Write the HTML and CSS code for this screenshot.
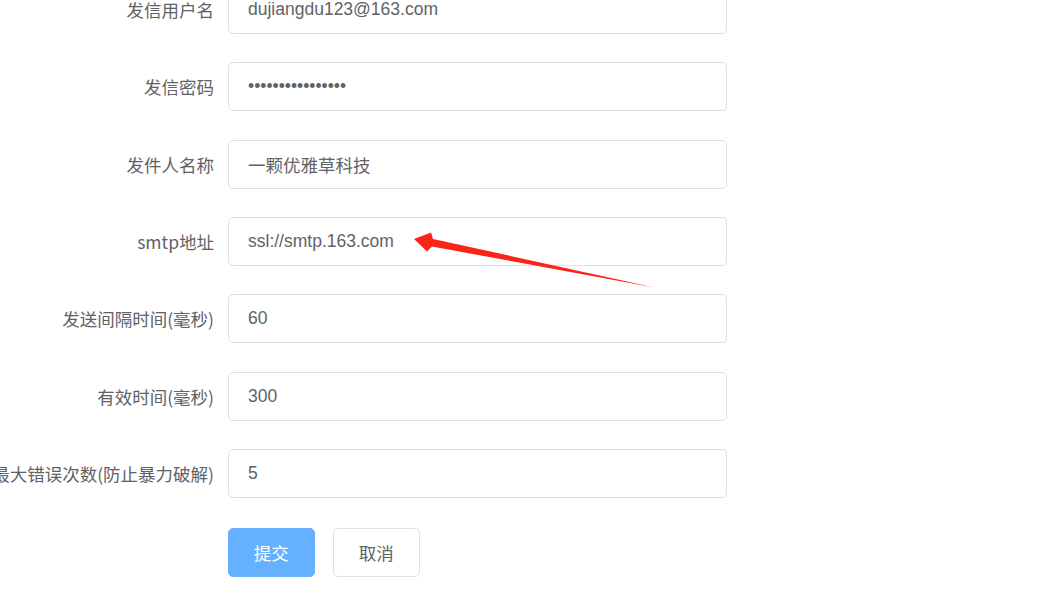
FILE: index.html
```html
<!DOCTYPE html>
<html lang="zh-CN">
<head>
<meta charset="utf-8">
<title>邮件配置</title>
<link rel="stylesheet" href="styles.css">
</head>
<body>
<form class="form">
  <div class="row">
    <label class="label">发信用户名</label>
    <div class="input">dujiangdu123@163.com</div>
  </div>
  <div class="row">
    <label class="label">发信密码</label>
    <div class="input pwd">••••••••••••••••</div>
  </div>
  <div class="row">
    <label class="label">发件人名称</label>
    <div class="input">一颗优雅草科技</div>
  </div>
  <div class="row">
    <label class="label">smtp地址</label>
    <div class="input">ssl://smtp.163.com</div>
  </div>
  <div class="row">
    <label class="label">发送间隔时间(毫秒)</label>
    <div class="input">60</div>
  </div>
  <div class="row">
    <label class="label">有效时间(毫秒)</label>
    <div class="input">300</div>
  </div>
  <div class="row">
    <label class="label">最大错误次数(防止暴力破解)</label>
    <div class="input">5</div>
  </div>
  <div class="row actions">
    <div class="label"></div>
    <div class="btns">
      <button type="button" class="btn primary">提交</button>
      <button type="button" class="btn">取消</button>
    </div>
  </div>
</form>
<svg class="arrow" width="1056" height="590" viewBox="0 0 1056 590" xmlns="http://www.w3.org/2000/svg">
  <polygon points="414,239 431,232.5 433,239 654.5,287.5 432,246.5 427,251.5" fill="#fb2419"/>
</svg>
</body>
</html>
```
FILE: styles.css
```css
html, body {
  margin: 0;
  padding: 0;
  background: #ffffff;
  overflow: hidden;
}
body {
  width: 1056px;
  height: 590px;
  position: relative;
  font-family: "Liberation Sans", "Noto Sans CJK SC", sans-serif;
  color: #606266;
}
.form {
  margin-top: -15.1px;
  display: flex;
  flex-direction: column;
  gap: 28.4px;
}
.row {
  display: flex;
  align-items: center;
  height: 49px;
}
.label {
  width: 214px;
  flex: none;
  box-sizing: border-box;
  padding-right: 0;
  display: flex;
  justify-content: flex-end;
  white-space: nowrap;
  font-family: "Noto Sans CJK SC", "Liberation Sans", sans-serif;
  font-size: 17.5px;
  color: #606266;
}
.input {
  margin-left: 14px;
  width: 499px;
  height: 49px;
  box-sizing: border-box;
  border: 1px solid #dcdfe6;
  border-radius: 5px;
  padding: 0 19px;
  display: flex;
  align-items: center;
  font-family: "Liberation Sans", "Noto Sans CJK SC", sans-serif;
  font-size: 17.5px;
  color: #606266;
  white-space: nowrap;
}
.actions {
  margin-top: 1px;
}
.btns {
  margin-left: 14px;
  display: flex;
  gap: 18.5px;
}
.btn {
  width: 86.5px;
  height: 49px;
  box-sizing: border-box;
  border: 1px solid #dcdfe6;
  border-radius: 5px;
  background: #ffffff;
  color: #606266;
  font-family: "Noto Sans CJK SC", "Liberation Sans", sans-serif;
  font-size: 17.5px;
  padding: 0;
  cursor: pointer;
}
.btn.primary {
  background: #66b1ff;
  border-color: #66b1ff;
  color: #ffffff;
}
.arrow {
  position: absolute;
  left: 0;
  top: 0;
  pointer-events: none;
}
```
